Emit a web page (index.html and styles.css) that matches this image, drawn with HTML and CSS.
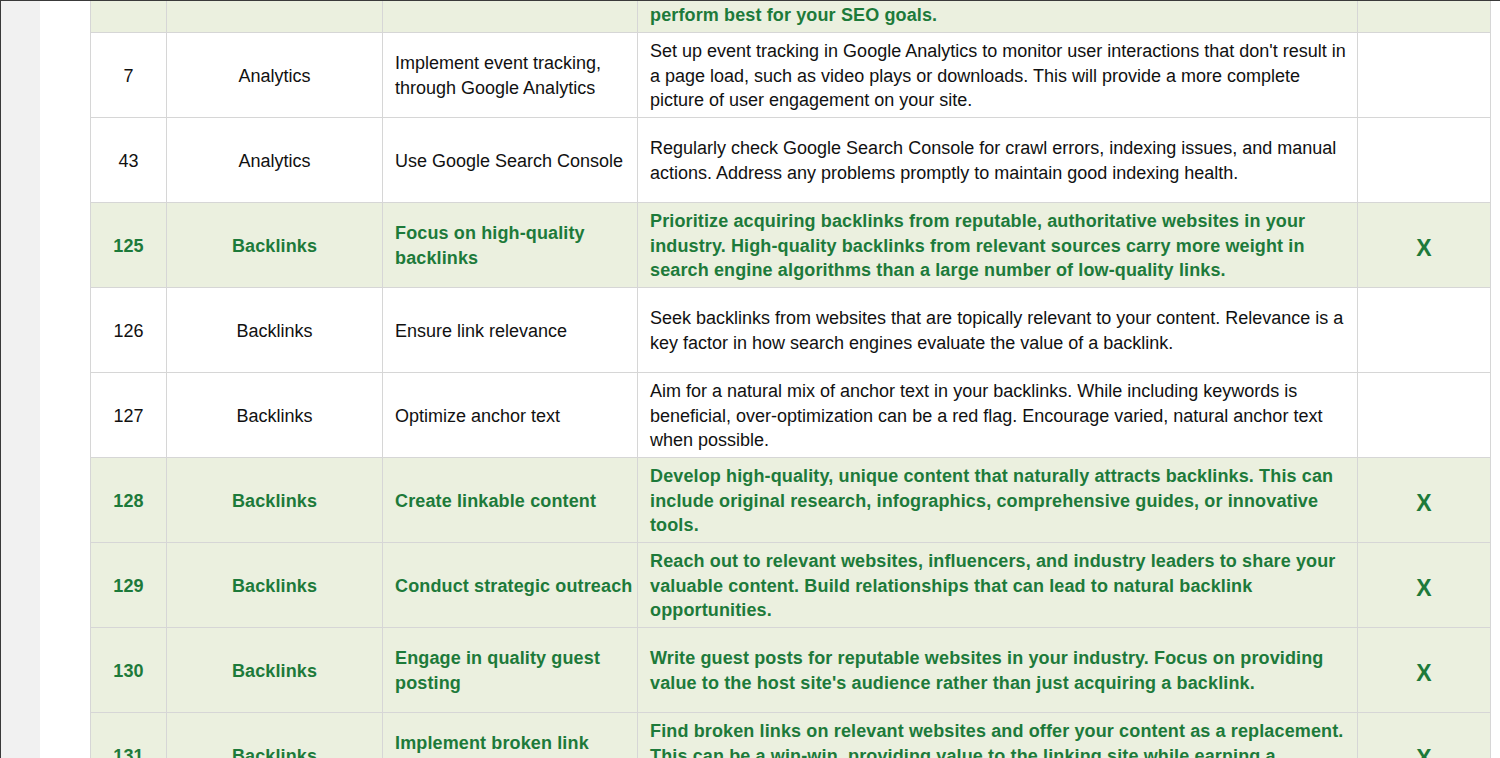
FILE: index.html
```html
<!DOCTYPE html>
<html lang="en">
<head>
<meta charset="utf-8">
<title>SEO Checklist</title>
<link rel="stylesheet" href="styles.css">
</head>
<body>
<div class="frame">
  <aside class="rail"></aside>
  <main class="content">
    <table class="sheet">
      <colgroup>
        <col class="c-num"><col class="c-cat"><col class="c-task"><col class="c-desc"><col class="c-done">
      </colgroup>
      <tbody>
        <tr class="done">
          <td class="center">124</td>
          <td class="center">On-Page SEO</td>
          <td>A/B test title tags</td>
          <td class="desc">Experiment with different title tag and meta description variations to see which ones drive more clicks and identify the formats that<br>perform best for your SEO goals.</td>
          <td class="center mark">X</td>
        </tr>
        <tr>
          <td class="center">7</td>
          <td class="center">Analytics</td>
          <td>Implement event tracking, through Google Analytics</td>
          <td class="desc">Set up event tracking in Google Analytics to monitor user interactions that don't result in a page load, such as video plays or downloads. This will provide a more complete picture of user engagement on your site.</td>
          <td class="center mark"></td>
        </tr>
        <tr>
          <td class="center">43</td>
          <td class="center">Analytics</td>
          <td>Use Google Search Console</td>
          <td class="desc">Regularly check Google Search Console for crawl errors, indexing issues, and manual actions. Address any problems promptly to maintain good indexing health.</td>
          <td class="center mark"></td>
        </tr>
        <tr class="done">
          <td class="center">125</td>
          <td class="center">Backlinks</td>
          <td>Focus on high-quality backlinks</td>
          <td class="desc">Prioritize acquiring backlinks from reputable, authoritative websites in your industry. High-quality backlinks from relevant sources carry more weight in search engine algorithms than a large number of low-quality links.</td>
          <td class="center mark">X</td>
        </tr>
        <tr>
          <td class="center">126</td>
          <td class="center">Backlinks</td>
          <td>Ensure link relevance</td>
          <td class="desc">Seek backlinks from websites that are topically relevant to your content. Relevance is a key factor in how search engines evaluate the value of a backlink.</td>
          <td class="center mark"></td>
        </tr>
        <tr>
          <td class="center">127</td>
          <td class="center">Backlinks</td>
          <td>Optimize anchor text</td>
          <td class="desc">Aim for a natural mix of anchor text in your backlinks. While including keywords is beneficial, over-optimization can be a red flag. Encourage varied, natural anchor text when possible.</td>
          <td class="center mark"></td>
        </tr>
        <tr class="done">
          <td class="center">128</td>
          <td class="center">Backlinks</td>
          <td>Create linkable content</td>
          <td class="desc">Develop high-quality, unique content that naturally attracts backlinks. This can include original research, infographics, comprehensive guides, or innovative tools.</td>
          <td class="center mark">X</td>
        </tr>
        <tr class="done">
          <td class="center">129</td>
          <td class="center">Backlinks</td>
          <td>Conduct strategic outreach</td>
          <td class="desc">Reach out to relevant websites, influencers, and industry leaders to share your valuable content. Build relationships that can lead to natural backlink opportunities.</td>
          <td class="center mark">X</td>
        </tr>
        <tr class="done">
          <td class="center">130</td>
          <td class="center">Backlinks</td>
          <td>Engage in quality guest posting</td>
          <td class="desc">Write guest posts for reputable websites in your industry. Focus on providing value to the host site's audience rather than just acquiring a backlink.</td>
          <td class="center mark">X</td>
        </tr>
        <tr class="done">
          <td class="center">131</td>
          <td class="center">Backlinks</td>
          <td>Implement broken link building</td>
          <td class="desc">Find broken links on relevant websites and offer your content as a replacement. This can be a win-win, providing value to the linking site while earning a backlink for yours.</td>
          <td class="center mark">X</td>
        </tr>
      </tbody>
    </table>
  </main>
</div>
</body>
</html>
```
FILE: styles.css
```css
html, body {
  margin: 0;
  padding: 0;
  background: #ffffff;
}
body {
  font-family: "Liberation Sans", Arial, sans-serif;
  color: #111111;
  height: 758px;
  overflow: hidden;
}
.frame {
  display: flex;
  height: 758px;
  border-top: 1px solid #3a3a3a;
  border-left: 1px solid #3a3a3a;
  box-sizing: border-box;
  overflow: hidden;
}
.rail {
  flex: 0 0 39px;
  background: #f1f1f1;
}
.content {
  flex: 1 1 auto;
  padding-left: 50px;
  overflow: hidden;
}
.sheet {
  border-collapse: collapse;
  table-layout: fixed;
  width: 1401px;
  margin-top: -54px;
  font-size: 18px;
  line-height: 24.6px;
}
.c-num { width: 76px; }
.c-cat { width: 216px; }
.c-task { width: 255px; }
.c-desc { width: 720px; }
.c-done { width: 133px; }
.sheet td {
  border: 1px solid #d6d6d6;
  height: 85px;
  padding: 2px 2px 0 12px;
  vertical-align: middle;
  box-sizing: border-box;
}
.sheet td.desc {
  padding-right: 7px;
}
.sheet td.center {
  text-align: center;
  padding: 2px 4px 0;
}
.sheet tr.done td {
  background: #ebf0df;
  color: #1d7a3a;
  font-weight: bold;
  letter-spacing: 0.13px;
}
.sheet td.mark {
  font-size: 23px;
  padding-top: 7px;
}
```
